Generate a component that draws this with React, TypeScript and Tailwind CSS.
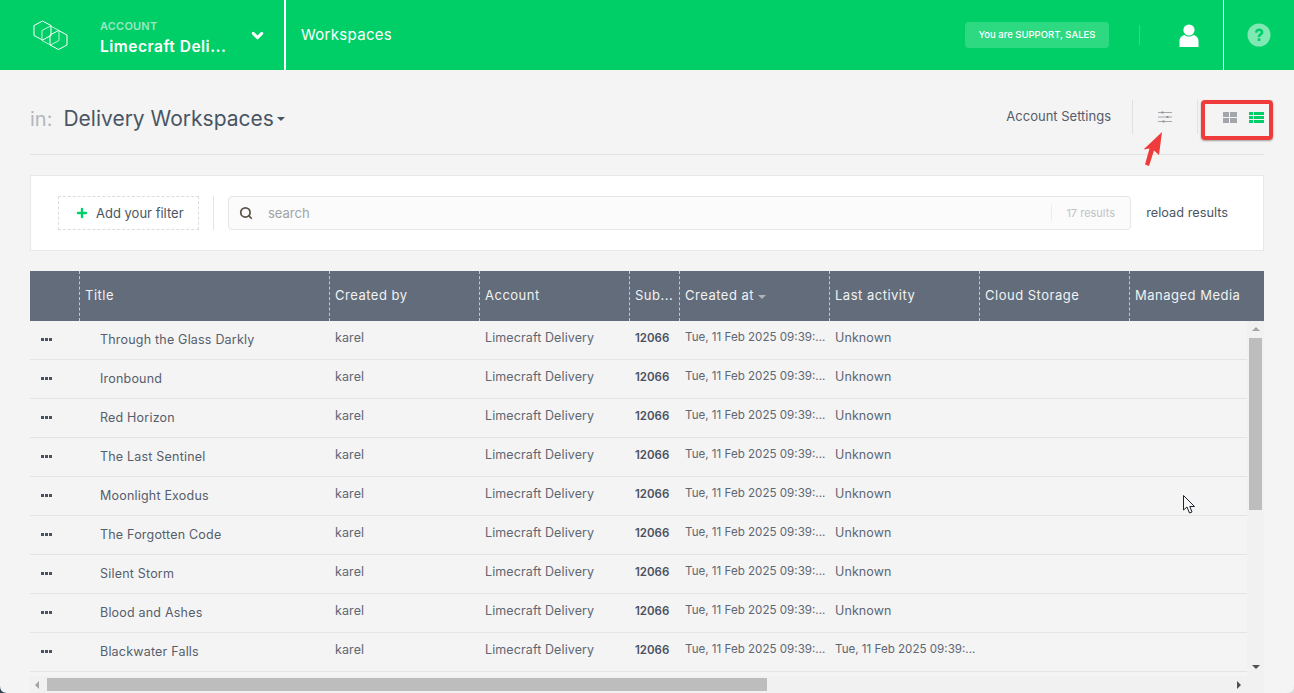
import { ChevronDown, Plus, Search } from "lucide-react"

const font = "font-['Inter','Liberation_Sans',sans-serif]"

const columns = [
    { label: '', width: 'w-[49px]' },
    { label: 'Title', width: 'w-[250px]' },
    { label: 'Created by', width: 'w-[150px]' },
    { label: 'Account', width: 'w-[150px]' },
    { label: 'Sub...', width: 'w-[50px]' },
    { label: 'Created at', width: 'w-[150px]', sorted: true },
    { label: 'Last activity', width: 'w-[150px]' },
    { label: 'Cloud Storage', width: 'w-[150px]' },
    { label: 'Managed Media', width: 'flex-1' },
]

const rows = [
    { title: 'Through the Glass Darkly' },
    { title: 'Ironbound' },
    { title: 'Red Horizon' },
    { title: 'The Last Sentinel' },
    { title: 'Moonlight Exodus' },
    { title: 'The Forgotten Code' },
    { title: 'Silent Storm' },
    { title: 'Blood and Ashes' },
    { title: 'Blackwater Falls', activity: 'Tue, 11 Feb 2025 09:39:...' },
]

const hexagon = (x: number, y: number) =>
    `M${x} ${y - 9.5} L${x + 8.5} ${y - 5} V${y + 5} L${x} ${y + 9.5} L${x - 8.5} ${y + 5} V${y - 5} Z`

const Logo = () => (
    <svg width="36" height="32" viewBox="0 0 36 32" fill="none" stroke="white" strokeWidth="1">
        <path d={hexagon(9.5, 11.5)} />
        <path d={hexagon(17.5, 16.5)} strokeOpacity="0.75" />
        <path d={hexagon(25.5, 21)} />
    </svg>
)

const Row = ({ title, activity }: { title: string, activity?: string }) => (
    <div className="flex h-[39px] shrink-0 items-center whitespace-nowrap border-b border-[#e4e4e4] text-[12.5px] tracking-[0.1px] text-[#5f6773]">
        <div className="flex w-[49px] items-center pb-px pl-[11px]">
            <div className="flex gap-px">
                <span className="size-[3px] bg-[#4a5160]"></span>
                <span className="size-[3px] bg-[#4a5160]"></span>
                <span className="size-[3px] bg-[#4a5160]"></span>
            </div>
        </div>
        <div className="w-[251px] pl-[21px] pt-[1px] tracking-[0.2px] text-[#565e6b]">{title}</div>
        <div className="w-[150px] pb-[3px] pl-[5px]">karel</div>
        <div className="w-[150px] pb-[3px] pl-[5px]">Limecraft Delivery</div>
        <div className="w-[50px] pb-[3px] pl-[5px] text-[11.5px] font-semibold tracking-normal text-[#4a5160]">12066</div>
        <div className="w-[150px] pb-[4px] pl-[5px] text-[11.6px] tracking-normal">Tue, 11 Feb 2025 09:39:...</div>
        <div className={`w-[150px] pl-[5px] ${activity ? 'pb-[4px] text-[11.6px] tracking-normal' : 'pb-[3px]'}`}>{activity || 'Unknown'}</div>
    </div>
)

const App = () => {
    return (
        <div className={`relative flex h-[693px] w-[1294px] flex-col overflow-hidden bg-[#f4f4f4] ${font}`}>
            <header className="flex h-[70px] shrink-0 items-stretch bg-[#00cf68] text-white">
                <div className="flex w-[286px] items-center border-r-2 border-white">
                    <div className="ml-[33px] w-[67px]"><Logo /></div>
                    <div className="w-[140px] pt-[5px]">
                        <div className="text-[11px] font-semibold leading-[14px] tracking-[0.2px] text-[#9be8c2]">ACCOUNT</div>
                        <div className="mt-[4px] whitespace-nowrap text-[15.5px] font-semibold leading-[20px] tracking-[0.5px]">Limecraft Deli...</div>
                    </div>
                    <ChevronDown size={17} strokeWidth={4} className="ml-[9px]" />
                </div>
                <div className="flex flex-1 items-center pl-[15px] text-[15px] tracking-[0.3px]">Workspaces</div>
                <div className="flex items-center">
                    <div className="flex h-[26px] w-[144px] items-center justify-center rounded bg-[#2dd981] text-[9.5px] font-medium">You are SUPPORT, SALES</div>
                    <div className="ml-[30px] h-[20px] w-px bg-[#2dd981]"></div>
                    <div className="flex w-[83px] justify-center pl-[14px]">
                        <svg width="20" height="23" viewBox="0 0 20 23" fill="white">
                            <circle cx="10" cy="6" r="5.6" />
                            <path d="M0.5 23 V17 C0.5 13.5 3 11.5 5.5 11 C7 12.2 8.5 12.6 10 12.6 C11.5 12.6 13 12.2 14.5 11 C17 11.5 19.5 13.5 19.5 17 V23 Z" />
                        </svg>
                    </div>
                </div>
                <div className="flex w-[71px] items-center justify-center border-l border-white pr-[1px]">
                    <svg width="24" height="24" viewBox="0 0 24 24">
                        <circle cx="12" cy="12" r="11.5" fill="#80e8b3" />
                        <path d="M8 9.5 C8 7 10 5.5 12.2 5.5 C14.6 5.5 16.4 7 16.4 9.2 C16.4 12 13.3 12 13.3 14 H10.7 C10.7 11 13.6 10.8 13.6 9.3 C13.6 8.5 13 8 12.1 8 C11.2 8 10.6 8.6 10.4 9.8 Z" fill="#00cf68" />
                        <rect x="10.6" y="15.3" width="2.8" height="2.8" rx="0.5" fill="#00cf68" />
                    </svg>
                </div>
            </header>

            <main className="flex min-h-0 flex-1 flex-col px-[30px]">
                <div className="flex h-[85px] shrink-0 items-center border-b border-[#e2e2e2] pt-[10px]">
                    <span className="mt-[3px] text-[20px] text-[#b3b7bc]">in:</span>
                    <span className="ml-[11px] mt-[3px] text-[21px] text-[#4a5563]">Delivery Workspaces</span>
                    <span className="ml-[3px] mt-[4px] border-x-[4px] border-t-[4px] border-x-transparent border-t-[#4a5563]"></span>
                    <div className="ml-auto flex items-center">
                        <span className="text-[13px] text-[#555d69]">Account Settings</span>
                        <div className="ml-[21px] h-[34px] w-px bg-[#e0e0e0]"></div>
                        <div className="flex w-[64px] justify-center">
                            <svg width="14" height="12" viewBox="0 0 14 12" fill="#8a8f96" stroke="#8a8f96" strokeWidth="1">
                                <path d="M0 1.5 H14 M0 6 H14 M0 10.5 H14" strokeOpacity="0.75" />
                                <rect x="3.5" y="0.5" width="2" height="2" stroke="none" />
                                <rect x="8.5" y="5" width="2" height="2" stroke="none" />
                                <rect x="4.5" y="9.5" width="2" height="2" stroke="none" />
                            </svg>
                        </div>
                        <div className="h-[34px] w-px bg-[#e0e0e0]"></div>
                        <div className="ml-[25px] grid grid-cols-[6px_7px] gap-[1px]">
                            <span className="h-[5px] bg-[#a3a7ab]"></span>
                            <span className="h-[5px] bg-[#a3a7ab]"></span>
                            <span className="h-[5px] bg-[#a3a7ab]"></span>
                            <span className="h-[5px] bg-[#a3a7ab]"></span>
                        </div>
                        <div className="ml-[12px] grid grid-cols-[4px_10px] gap-[1px]">
                            <span className="h-[3px] bg-[#00cf68]"></span>
                            <span className="h-[3px] bg-[#00cf68]"></span>
                            <span className="h-[3px] bg-[#00cf68]"></span>
                            <span className="h-[3px] bg-[#00cf68]"></span>
                            <span className="h-[3px] bg-[#00cf68]"></span>
                            <span className="h-[3px] bg-[#00cf68]"></span>
                        </div>
                    </div>
                </div>

                <div className="mt-[20px] flex h-[76px] shrink-0 items-center border border-[#e8e8e8] bg-white pl-[27px] pr-[35px]">
                    <div className="flex h-[34px] w-[141px] items-center border border-dashed border-[#dcdcdc] pl-[16px] text-[13px] text-[#4a5563]">
                        <Plus size={14} strokeWidth={4} className="text-[#00cf68]" />
                        <span className="ml-[7px] pt-px">Add your filter</span>
                    </div>
                    <div className="ml-[14px] h-[34px] w-px bg-[#e4e4e4]"></div>
                    <div className="ml-[14px] flex h-[34px] w-[903px] items-center rounded border border-[#e6e6e6] bg-[#fbfbfb] pl-[10px] pr-[15px]">
                        <Search size={14} strokeWidth={3} className="text-[#5c5346]" />
                        <span className="ml-[15px] pt-px text-[13px] text-[#a0a4a9]">search</span>
                        <div className="ml-auto h-[16px] w-px bg-[#ececec]"></div>
                        <span className="ml-[14px] text-[11px] text-[#c0c2c5]">17 results</span>
                    </div>
                    <span className="ml-auto text-[12.75px] text-[#4a5563]">reload results</span>
                </div>

                <div className="mt-[20px] flex h-[50px] shrink-0 whitespace-nowrap bg-[#626c7a] text-[13px] tracking-[0.5px] text-[#f1f2f3]">
                    {columns.map((col, i) => (
                        <div key={i} className={`flex items-center ${col.width} ${i > 0 ? 'border-l border-dashed border-[#c5c9ce] pl-[5px]' : ''}`}>
                            <span>{col.label}</span>
                            {col.sorted && <span className="ml-[4px] mt-[1px] border-x-[4px] border-t-[4px] border-x-transparent border-t-[#aeb3ba]"></span>}
                        </div>
                    ))}
                </div>

                <div className="flex min-h-0 flex-1">
                    <div className="flex min-w-0 flex-1 flex-col">
                        <div className="flex min-h-0 flex-1 flex-col overflow-hidden">
                            {rows.map(row => (
                                <Row key={row.title} title={row.title} activity={row.activity} />
                            ))}
                        </div>
                        <div className="flex h-[17px] shrink-0 items-center bg-[#f1f1f1]">
                            <span className="ml-[5px] border-y-[4px] border-r-[4px] border-y-transparent border-r-[#a3a3a3]"></span>
                            <div className="ml-[8px] h-[13px] w-[720px] bg-[#bdbdbd]"></div>
                            <span className="ml-auto mr-[6px] border-y-[4px] border-l-[4px] border-y-transparent border-l-[#505050]"></span>
                        </div>
                    </div>
                    <div className="flex w-[17px] shrink-0 flex-col items-center bg-[#f1f1f1]">
                        <span className="mt-[6px] border-x-[4px] border-b-[4px] border-x-transparent border-b-[#a3a3a3]"></span>
                        <div className="mt-[7px] h-[172px] w-[13px] bg-[#bdbdbd]"></div>
                        <span className="mb-[24px] mt-auto border-x-[4px] border-t-[4px] border-x-transparent border-t-[#505050]"></span>
                    </div>
                </div>
            </main>

            {/* annotation overlays */}
            <div className="absolute left-[1201px] top-[100px] h-[40px] w-[72px] rounded-[4px] border-[4px] border-[#ef3b3b] shadow-[0_1px_2px_rgba(0,0,0,0.35)]"></div>
            <svg className="absolute left-[1143px] top-[131px]" width="20" height="36" viewBox="0 0 20 36" fill="#ef3b3b">
                <path d="M19 1 L16 24 L11 19.5 L6 35 L2 33.5 L6.5 17.5 L0.5 18.5 Z" />
            </svg>
            <svg className="absolute left-[1182px] top-[494px]" width="15" height="21" viewBox="0 0 15 21" fill="#f7f7f7" stroke="#1f2430" strokeWidth="1">
                <path d="M1.5 1.5 V16 L5 13 L7.5 19 L10 18 L7.8 12.5 L12.5 12.5 Z" />
            </svg>
            {/* window corners */}
            <svg className="absolute bottom-0 left-0" width="8" height="8" viewBox="0 0 8 8" fill="#2f4254">
                <path d="M0 1 Q0 8 7 8 H0 Z" />
            </svg>
            <svg className="absolute bottom-0 right-0" width="8" height="8" viewBox="0 0 8 8" fill="#d9d9d9">
                <path d="M8 1 Q8 8 1 8 H8 Z" />
            </svg>
        </div>
    )
}

export default App
